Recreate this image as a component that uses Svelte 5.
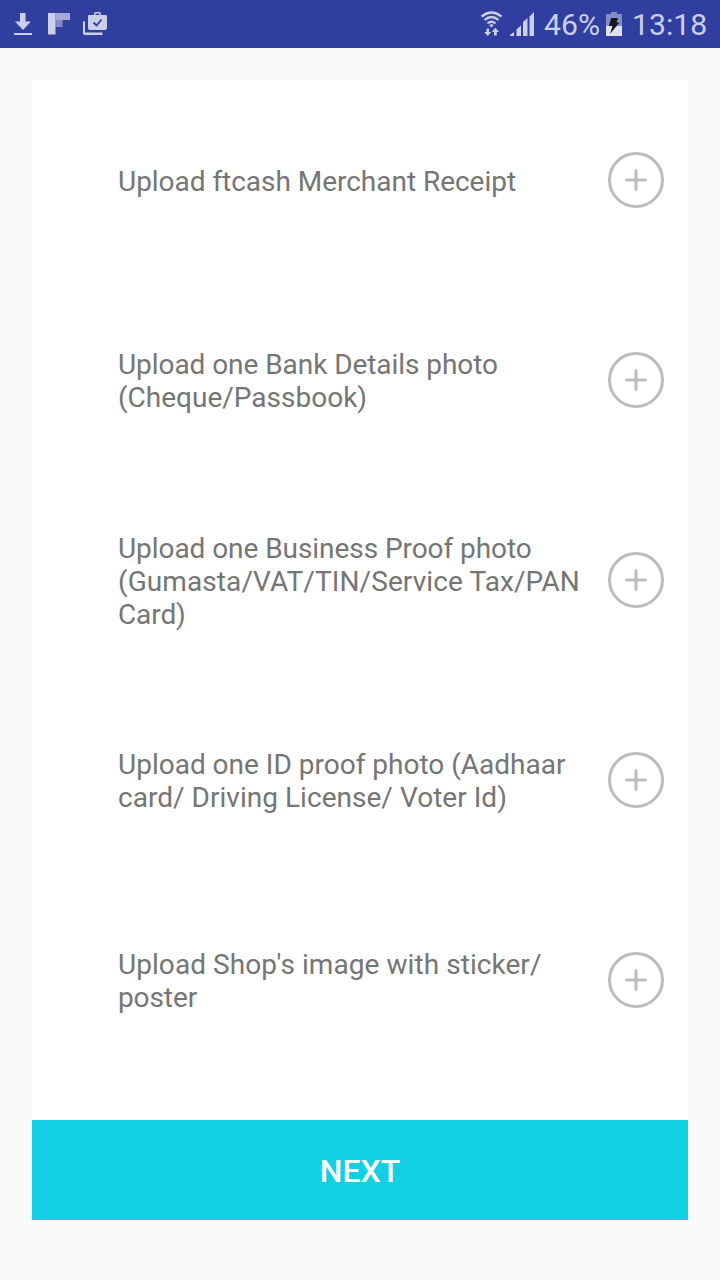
<script>
  const items = [
    [{ text: 'Upload ftcash Merchant Receipt', tracking: -0.03 }],
    [{ text: 'Upload one Bank Details photo', tracking: -0.06 }, { text: '(Cheque/Passbook)', tracking: 0 }],
    [
      { text: 'Upload one Business Proof photo', tracking: -0.06 },
      { text: '(Gumasta/VAT/TIN/Service Tax/PAN', tracking: 0.09 },
      { text: 'Card)', tracking: -0.1 }
    ],
    [{ text: 'Upload one ID proof photo (Aadhaar', tracking: 0 }, { text: 'card/ Driving License/ Voter Id)', tracking: 0.03 }],
    [{ text: "Upload Shop's image with sticker/", tracking: 0.06 }, { text: 'poster', tracking: -0.1 }]
  ];
</script>

<div class="screen">
  <header class="status">
    <svg class="notifications" width="120" height="48" viewBox="0 0 120 48" aria-hidden="true">
      <g fill="#cbcfea">
        <path d="M20 13h5.500v8.500H31L23 30l-8-8.500h5z" />
        <path d="M14 33h18v2H14z" />
        <path d="M48 13h7.500v21.500H48z" />
        <path d="M55.500 13H70v7H55.500z" opacity=".75" />
        <path d="M55.500 20H62.500v7H55.500z" opacity=".52" />
        <path d="M83 21.500h2V32.500h17.500V35H85q-2 0-2-2z" />
        <path fill-rule="evenodd" d="M89 15h5v-1.200q0-1.800 1.800-1.800h3.400q1.800 0 1.800 1.800V15h5q1 0 1 1v12q0 2-2 2H90q-2 0-2-2V16q0-1 1-1zm6.500 0h4v-1.500h-4z" />
      </g>
      <path d="M93.500 22.500l3 3 5-6" fill="none" stroke="#303f9f" stroke-width="1.800" />
    </svg>
    <div class="system">
      <svg class="radio" width="64" height="48" viewBox="0 0 64 48" aria-hidden="true">
        <g fill="none" stroke="#cbcfea" stroke-width="2.300">
          <path d="M1.500 16.500Q11.500 8.500 21.500 16.500" />
          <path d="M4.500 20Q11.500 14 18.500 20" />
          <path d="M7.500 23.500Q11.500 20 15.500 23.500" />
        </g>
        <g fill="#cbcfea">
          <path d="M9.200 25q2.300-1.500 4.600 0l-2.300 2.500z" />
          <path d="M6.500 28.500H9V32h2.200l-3.500 4-3.500-4h2.300z" />
          <path d="M14 35.500h2.800V32H19l-3.600-4.200L11.800 32H14z" />
          <path d="M30 36v-1l4-3v4zM36.500 36v-6.500l4.500-4V36zM43 36V22l4.500-4V36zM49.500 36V16.500L54 12v24z" />
        </g>
      </svg>
      <span class="percent">46%</span>
      <svg class="battery" width="16" height="48" viewBox="0 0 16 48" aria-hidden="true">
        <path d="M0 14h5v-2h6v2h5v12H0z" fill="#858dc8" />
        <path d="M0 26h16v10H0z" fill="#dfe1f3" />
        <path d="M5 18h7l-1.500 4.500H13.500L4 34l2.500-8H3z" fill="#17191f" />
      </svg>
      <span class="clock">13:18</span>
    </div>
  </header>
  <main>
    <ul>
      {#each items as lines}
        <li>
          <p>
            {#each lines as line}
              <span style="letter-spacing: {line.tracking}px">{line.text}</span>
            {/each}
          </p>
          <button class="add" aria-label="Add photo">
            <svg width="56" height="56" viewBox="0 0 56 56" fill="none" stroke="#bcbcbc">
              <circle cx="28" cy="28" r="26.500" stroke-width="3" />
              <path d="M18.500 28h19M28 18.500v19" stroke-width="3" stroke-linecap="round" />
            </svg>
          </button>
        </li>
      {/each}
    </ul>
    <button class="next">NEXT</button>
  </main>
</div>

<style>
  :global(body) { margin: 0; }
  .screen {
    width: 720px;
    height: 1280px;
    background: #fafafa;
    font-family: Roboto, sans-serif;
    overflow: hidden;
  }
  .status {
    height: 48px;
    display: flex;
    justify-content: space-between;
    background: #303f9f;
    color: #cbcfea;
    font-size: 30.200px;
    line-height: 50px;
  }
  svg { display: block; }
  .system { display: flex; width: 240px; }
  .system > * { flex: none; }
  .percent { width: 62px; }
  .clock { margin-left: 10px; }
  main {
    display: flex;
    flex-direction: column;
    height: 1140px;
    margin: 32px 32px 0;
    background: #fff;
  }
  ul { margin: 0; padding: 0; list-style: none; flex: 1; }
  li {
    height: 200px;
    box-sizing: border-box;
    padding: 0 24px 0 86px;
    display: flex;
    align-items: center;
    justify-content: space-between;
  }
  p {
    margin: 2px 0 0;
    color: #757575;
    font-size: 28px;
    line-height: 33px;
    white-space: nowrap;
  }
  p span { display: block; }
  button { border: 0; padding: 0; font-family: inherit; }
  .add { width: 56px; height: 56px; background: none; }
  .next {
    height: 100px;
    padding-top: 2px;
    background: #12cfe3;
    color: #fff;
    font-size: 32px;
    font-weight: 500;
  }
</style>
